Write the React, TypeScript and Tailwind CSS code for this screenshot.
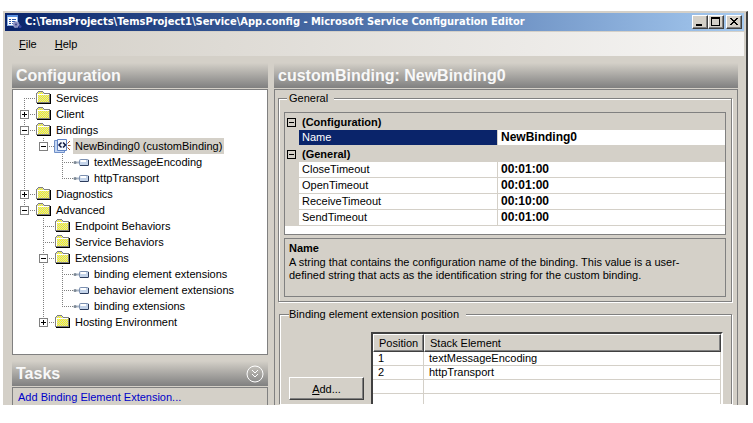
import type { ReactNode } from "react";

type Guide = "none" | "line" | "tee" | "first" | "last" | "plus" | "plusLast" | "minus" | "minusLast";
type IconKind = "folder" | "binding" | "element";

interface Node {
  label: string;
  icon: IconKind;
  guides: Guide[];
  selected?: boolean;
}

const nodes: Node[] = [
  { label: "Services", icon: "folder", guides: ["first"] },
  { label: "Client", icon: "folder", guides: ["plus"] },
  { label: "Bindings", icon: "folder", guides: ["minus"] },
  { label: "NewBinding0 (customBinding)", icon: "binding", guides: ["line", "minusLast"], selected: true },
  { label: "textMessageEncoding", icon: "element", guides: ["line", "none", "tee"] },
  { label: "httpTransport", icon: "element", guides: ["line", "none", "last"] },
  { label: "Diagnostics", icon: "folder", guides: ["plus"] },
  { label: "Advanced", icon: "folder", guides: ["minusLast"] },
  { label: "Endpoint Behaviors", icon: "folder", guides: ["none", "tee"] },
  { label: "Service Behaviors", icon: "folder", guides: ["none", "tee"] },
  { label: "Extensions", icon: "folder", guides: ["none", "minus"] },
  { label: "binding element extensions", icon: "element", guides: ["none", "line", "tee"] },
  { label: "behavior element extensions", icon: "element", guides: ["none", "line", "tee"] },
  { label: "binding extensions", icon: "element", guides: ["none", "line", "last"] },
  { label: "Hosting Environment", icon: "folder", guides: ["none", "plusLast"] },
];

function GuideCell({ kind }: { kind: Guide }) {
  const plus = kind === "plus" || kind === "plusLast";
  const box = plus || kind === "minus" || kind === "minusLast";
  const up = kind !== "none" && kind !== "first";
  const down = up ? kind !== "last" && kind !== "minusLast" && kind !== "plusLast" : kind === "first";
  const across = kind !== "none" && kind !== "line";
  return (
    <svg className="h-4 w-[19px] shrink-0 overflow-visible" viewBox="0 0 19 16" shapeRendering="crispEdges" aria-hidden="true">
      <g stroke="#808080" strokeDasharray="1 1" fill="none">
        {up && <path d="M9.500 0V8" />}
        {down && <path d="M9.500 8V16" />}
        {across && <path d="M9 8.500H21" />}
      </g>
      {box && (
        <g>
          <rect x="5.500" y="4.500" width="8" height="8" fill="#fff" stroke="#808080" />
          <path d="M7 8.500H12" stroke="#000" />
          {plus && <path d="M9.500 6V11" stroke="#000" />}
        </g>
      )}
    </svg>
  );
}

function FolderIcon() {
  return (
    <svg className="h-4 w-4" viewBox="0 0 16 16" shapeRendering="crispEdges" aria-hidden="true">
      <defs>
        <pattern id="folder-dither" width="2" height="2" patternUnits="userSpaceOnUse">
          <rect width="2" height="2" fill="#ffff00" />
          <rect width="1" height="1" fill="#d0d0d0" />
          <rect x="1" y="1" width="1" height="1" fill="#d0d0d0" />
        </pattern>
      </defs>
      <path d="M1 13.500H14.500V4" stroke="#000" fill="none" />
      <path d="M.5 12.500V3.500L2.500 1.500H6.500L8.500 3.500H13.500V12.500Z" fill="url(#folder-dither)" stroke="#808080" />
      <path d="M1.500 12V4.500H13" stroke="#fff" fill="none" />
    </svg>
  );
}

function BindingIcon() {
  return (
    <svg className="h-4 w-4 overflow-visible" viewBox="0 0 16 16" aria-hidden="true">
      <path d="M-.5 2.500H9.500V14.500H-.5Z" fill="#c4d6f2" stroke="#6f8fc8" />
      <path d="M2.500 1.500H11.500V12.500H2.500Z" fill="#f4f8ff" stroke="#5f82c4" />
      <path d="M6.500 4.500 4 7 6.500 9.500M8 4.500 10.500 7 8 9.500" fill="none" stroke="#101840" strokeWidth="1.500" />
      <path d="M12.500 5.500 15 3M13 7.500H15.500M12.500 9.500 15 12" stroke="#a0522d" fill="none" />
    </svg>
  );
}

function ElementIcon() {
  return (
    <svg className="h-4 w-4 overflow-visible" viewBox="0 0 16 16" aria-hidden="true">
      <path d="M1 8.500H5" stroke="#a8b4c4" strokeWidth="2" />
      <circle cx="1" cy="8.500" r="1.500" fill="#7c8894" />
      <rect x="5.500" y="5.500" width="9" height="6" rx="1" fill="#c4d4ea" stroke="#7c90b0" />
      <path d="M6 11.500H14Q14.500 11.500 14.500 11V6" fill="none" stroke="#2c3c5c" />
      <path d="M6.500 7H12" stroke="#fff" strokeWidth="2" />
    </svg>
  );
}

function NodeIcon({ icon }: { icon: IconKind }) {
  if (icon === "binding") return <BindingIcon />;
  if (icon === "element") return <ElementIcon />;
  return <FolderIcon />;
}

function PanelHeader({ title, children }: { title: string; children?: ReactNode }) {
  return (
    <div className="flex h-[25px] items-center justify-between bg-linear-to-b from-[#d4d0c8] to-[#808080] px-1">
      <h2 className="text-base leading-5 font-bold text-[#f8f8f8]">{title}</h2>
      {children}
    </div>
  );
}

function CaptionButton({ label, children }: { label: string; children: ReactNode }) {
  return (
    <button
      type="button"
      aria-label={label}
      className="h-[14px] w-4 border border-t-white border-r-[#404040] border-b-[#404040] border-l-white bg-[#d4d0c8] shadow-[inset_-1px_-1px_0_#808080]"
    >
      <svg className="h-3 w-[14px]" viewBox="0 0 14 12" shapeRendering="crispEdges" aria-hidden="true">
        {children}
      </svg>
    </button>
  );
}

function TitleBar() {
  return (
    <header className="flex h-[18px] items-center bg-linear-to-r from-[#0a246a] to-[#a6caf0] pr-0.5 pl-0.5">
      <svg className="h-4 w-4 shrink-0" viewBox="0 0 16 16" aria-hidden="true">
        <rect x=".5" y="1.500" width="10" height="10" fill="#fff" stroke="#8db4ea" />
        <path d="M0 2H11" stroke="#5b91e0" strokeWidth="2" />
        <path d="M2 5.500H4M2 7.500H4M2 9.500H4M5 5.500H9M5 7.500H9M5 9.500H7" stroke="#2e58a8" />
        <circle cx="9" cy="10.500" r="3" fill="#8a8fc0" stroke="#b4b8dc" strokeDasharray="1.500 1" />
        <circle cx="9" cy="10.500" r="1" fill="#3c4488" />
        <circle cx="13" cy="12.500" r="1.500" fill="#3c48a0" />
      </svg>
      <h1 className="ml-0.5 flex-1 truncate font-['DejaVu_Sans_Condensed','DejaVu_Sans',sans-serif] text-[11px] leading-4 font-bold text-white">
        C:\TemsProjects\TemsProject1\Service\App.config - Microsoft Service Configuration Editor
      </h1>
      <div className="flex">
        <CaptionButton label="Minimize">
          <path d="M3 9H9" stroke="#000" strokeWidth="2" />
        </CaptionButton>
        <CaptionButton label="Maximize">
          <path d="M2.500 1V9.500H10.500V1M2 2H11" stroke="#000" fill="none" />
          <path d="M2 2H11" stroke="#000" strokeWidth="2" />
        </CaptionButton>
        <div className="ml-0.5 flex">
          <CaptionButton label="Close">
            <path d="M3 2H5V3H6V4H8V3H9V2H11V3H10V4H9V5H8V6H9V7H10V8H11V9H9V8H8V7H6V8H5V9H3V8H4V7H5V6H6V5H5V4H4V3H3Z" />
          </CaptionButton>
        </div>
      </div>
    </header>
  );
}

function Tree() {
  return (
    <ul className="h-[266px] border border-[#808080] bg-white pl-0.5">
      {nodes.map((n) => (
        <li key={n.label} className="flex h-4 items-center">
          {n.guides.map((g, i) => (
            <GuideCell key={i} kind={g} />
          ))}
          <span className="mr-0.5 ml-0.5 shrink-0">
            <NodeIcon icon={n.icon} />
          </span>
          <span className={n.selected ? "bg-[#d4d0c8] px-0.5 leading-4" : "px-0.5 leading-4"}>{n.label}</span>
        </li>
      ))}
    </ul>
  );
}

function CategoryRow({ title }: { title: string }) {
  return (
    <tr className="h-4">
      <td>
        <svg className="ml-0.5 h-[9px] w-[9px]" viewBox="0 0 9 9" shapeRendering="crispEdges" aria-hidden="true">
          <path d="M.5.500H8.500V8.500H.5ZM2 4.500H7" stroke="#000" fill="none" />
        </svg>
      </td>
      <th colSpan={2} scope="rowgroup" className="px-[3px] text-left font-bold">
        {title}
      </th>
    </tr>
  );
}

function PropertyRow({ name, value, active }: { name: string; value: string; active?: boolean }) {
  return (
    <tr className="h-4">
      <td />
      <th
        scope="row"
        className={
          active
            ? "border-r border-b border-[#d4d0c8] bg-[#0a246a] px-[3px] text-left font-normal text-white"
            : "border-r border-b border-[#d4d0c8] bg-white px-[3px] text-left font-normal"
        }
      >
        {name}
      </th>
      <td className="border-b border-[#d4d0c8] bg-white px-[3px] text-xs leading-[15px] font-bold">{value}</td>
    </tr>
  );
}

const groupBox = "min-w-0 border border-[#808080] shadow-[inset_1px_1px_0_#fff,1px_1px_0_#fff]";

function GeneralGroup() {
  return (
    <fieldset className={`${groupBox} px-[5px] pb-1`}>
      <legend className="ml-[3px] bg-[#d4d0c8] pr-1.5 pl-0.5 leading-4">General</legend>
      <div className="mt-1.5 border border-[#808080] bg-white pb-2">
        <table className="w-full table-fixed border-separate border-spacing-0 border-t border-[#d4d0c8] bg-[#d4d0c8] leading-[15px]">
          <colgroup>
            <col className="w-[14px]" />
            <col className="w-[199px]" />
            <col />
          </colgroup>
          <tbody>
            <CategoryRow title="(Configuration)" />
            <PropertyRow name="Name" value="NewBinding0" active />
            <CategoryRow title="(General)" />
            <PropertyRow name="CloseTimeout" value="00:01:00" />
            <PropertyRow name="OpenTimeout" value="00:01:00" />
            <PropertyRow name="ReceiveTimeout" value="00:10:00" />
            <PropertyRow name="SendTimeout" value="00:01:00" />
          </tbody>
        </table>
      </div>
      <section className="mt-[3px] h-[59px] border border-[#808080] pt-0.5 pr-8 pl-1">
        <h3 className="leading-[15px] font-bold">Name</h3>
        <p className="leading-[13px]">
          A string that contains the configuration name of the binding. This value is a user-defined string that acts as
          the identification string for the custom binding.
        </p>
      </section>
    </fieldset>
  );
}

const stack = [
  ["1", "textMessageEncoding"],
  ["2", "httpTransport"],
  ["", ""],
];

const headCell =
  "border-t border-l border-t-white border-l-white border-r border-r-[#404040] border-b border-b-[#404040] px-[5px] text-left font-normal shadow-[inset_-1px_-1px_0_#808080]";

function PositionGroup() {
  return (
    <fieldset className={`${groupBox} ml-px border-b-0 pr-2 pl-[9px]`}>
      <legend className="bg-[#d4d0c8] pr-[7px] leading-4">Binding element extension position</legend>
      <div className="mt-2.5 flex items-start gap-[7px]">
        <button
          type="button"
          className="mt-[45px] h-[23px] w-[75px] border border-t-white border-r-[#404040] border-b-[#404040] border-l-white shadow-[inset_-1px_-1px_0_#808080]"
        >
          <span className="underline">A</span>dd...
        </button>
        <div className="flex-1 border-2 border-b-0 border-t-[#404040] border-r-white border-l-[#404040] bg-white">
          <table className="w-full table-fixed border-separate border-spacing-0">
            <colgroup>
              <col className="w-[51px]" />
              <col />
            </colgroup>
            <thead>
              <tr className="h-[17px] bg-[#d4d0c8]">
                <th scope="col" className={headCell}>Position</th>
                <th scope="col" className={headCell}>Stack Element</th>
              </tr>
            </thead>
            <tbody>
              {stack.map(([pos, name], i) => (
                <tr key={i} className="h-[14px] leading-[13px]">
                  <td className="border-r border-b border-[#d4d0c8] px-[5px]">{pos}</td>
                  <td className="border-r border-b border-[#d4d0c8] px-[5px]">{name}</td>
                </tr>
              ))}
              <tr className="h-2.5">
                <td className="border-r border-[#d4d0c8]" />
                <td className="border-r border-[#d4d0c8]" />
              </tr>
            </tbody>
          </table>
        </div>
      </div>
    </fieldset>
  );
}

export default function App() {
  return (
    <div className="bg-white pt-[11px] pr-[5px] pb-[18px] pl-[3px] font-['Liberation_Sans',Arial,sans-serif] text-[11px] leading-4 text-black">
      <div className="border-t border-r-2 border-t-[#d4d0c8] border-r-[#404040] bg-[#d4d0c8] pt-px pr-0.5 pl-0.5">
        <TitleBar />
        <nav className="mt-px flex h-6 items-start gap-1.5 bg-linear-to-r from-[#d4d0c8] to-[#f6f5f4] px-2 pt-1">
          <button type="button" className="px-1.5">
            <span className="underline">F</span>ile
          </button>
          <button type="button" className="px-1.5">
            <span className="underline">H</span>elp
          </button>
        </nav>
        <main className="flex gap-1.5 pt-[7px] pr-1.5 pl-[7px]">
          <div className="flex w-64 shrink-0 flex-col">
            <PanelHeader title="Configuration" />
            <div className="mt-px">
              <Tree />
            </div>
            <div className="mt-1.5">
              <PanelHeader title="Tasks">
                <button type="button" aria-label="Collapse tasks">
                  <svg className="h-[18px] w-[18px]" viewBox="0 0 18 18" fill="none" stroke="#fff" aria-hidden="true">
                    <circle cx="9" cy="9" r="8" />
                    <path d="M6 5 9 8 12 5M6 9 9 12 12 9" />
                  </svg>
                </button>
              </PanelHeader>
            </div>
            <div className="mt-px flex-1 border border-b-0 border-[#808080] px-[5px] pt-0.5">
              <a href="#add" className="block leading-[15px] text-[#0000c8]">
                Add Binding Element Extension...
              </a>
            </div>
          </div>
          <div className="flex min-w-0 flex-1 flex-col">
            <PanelHeader title="customBinding: NewBinding0" />
            <div className="mt-px flex flex-1 flex-col gap-1 border border-b-0 border-[#808080] pr-[5px] pl-[3px]">
              <GeneralGroup />
              <PositionGroup />
            </div>
          </div>
        </main>
      </div>
    </div>
  );
}
